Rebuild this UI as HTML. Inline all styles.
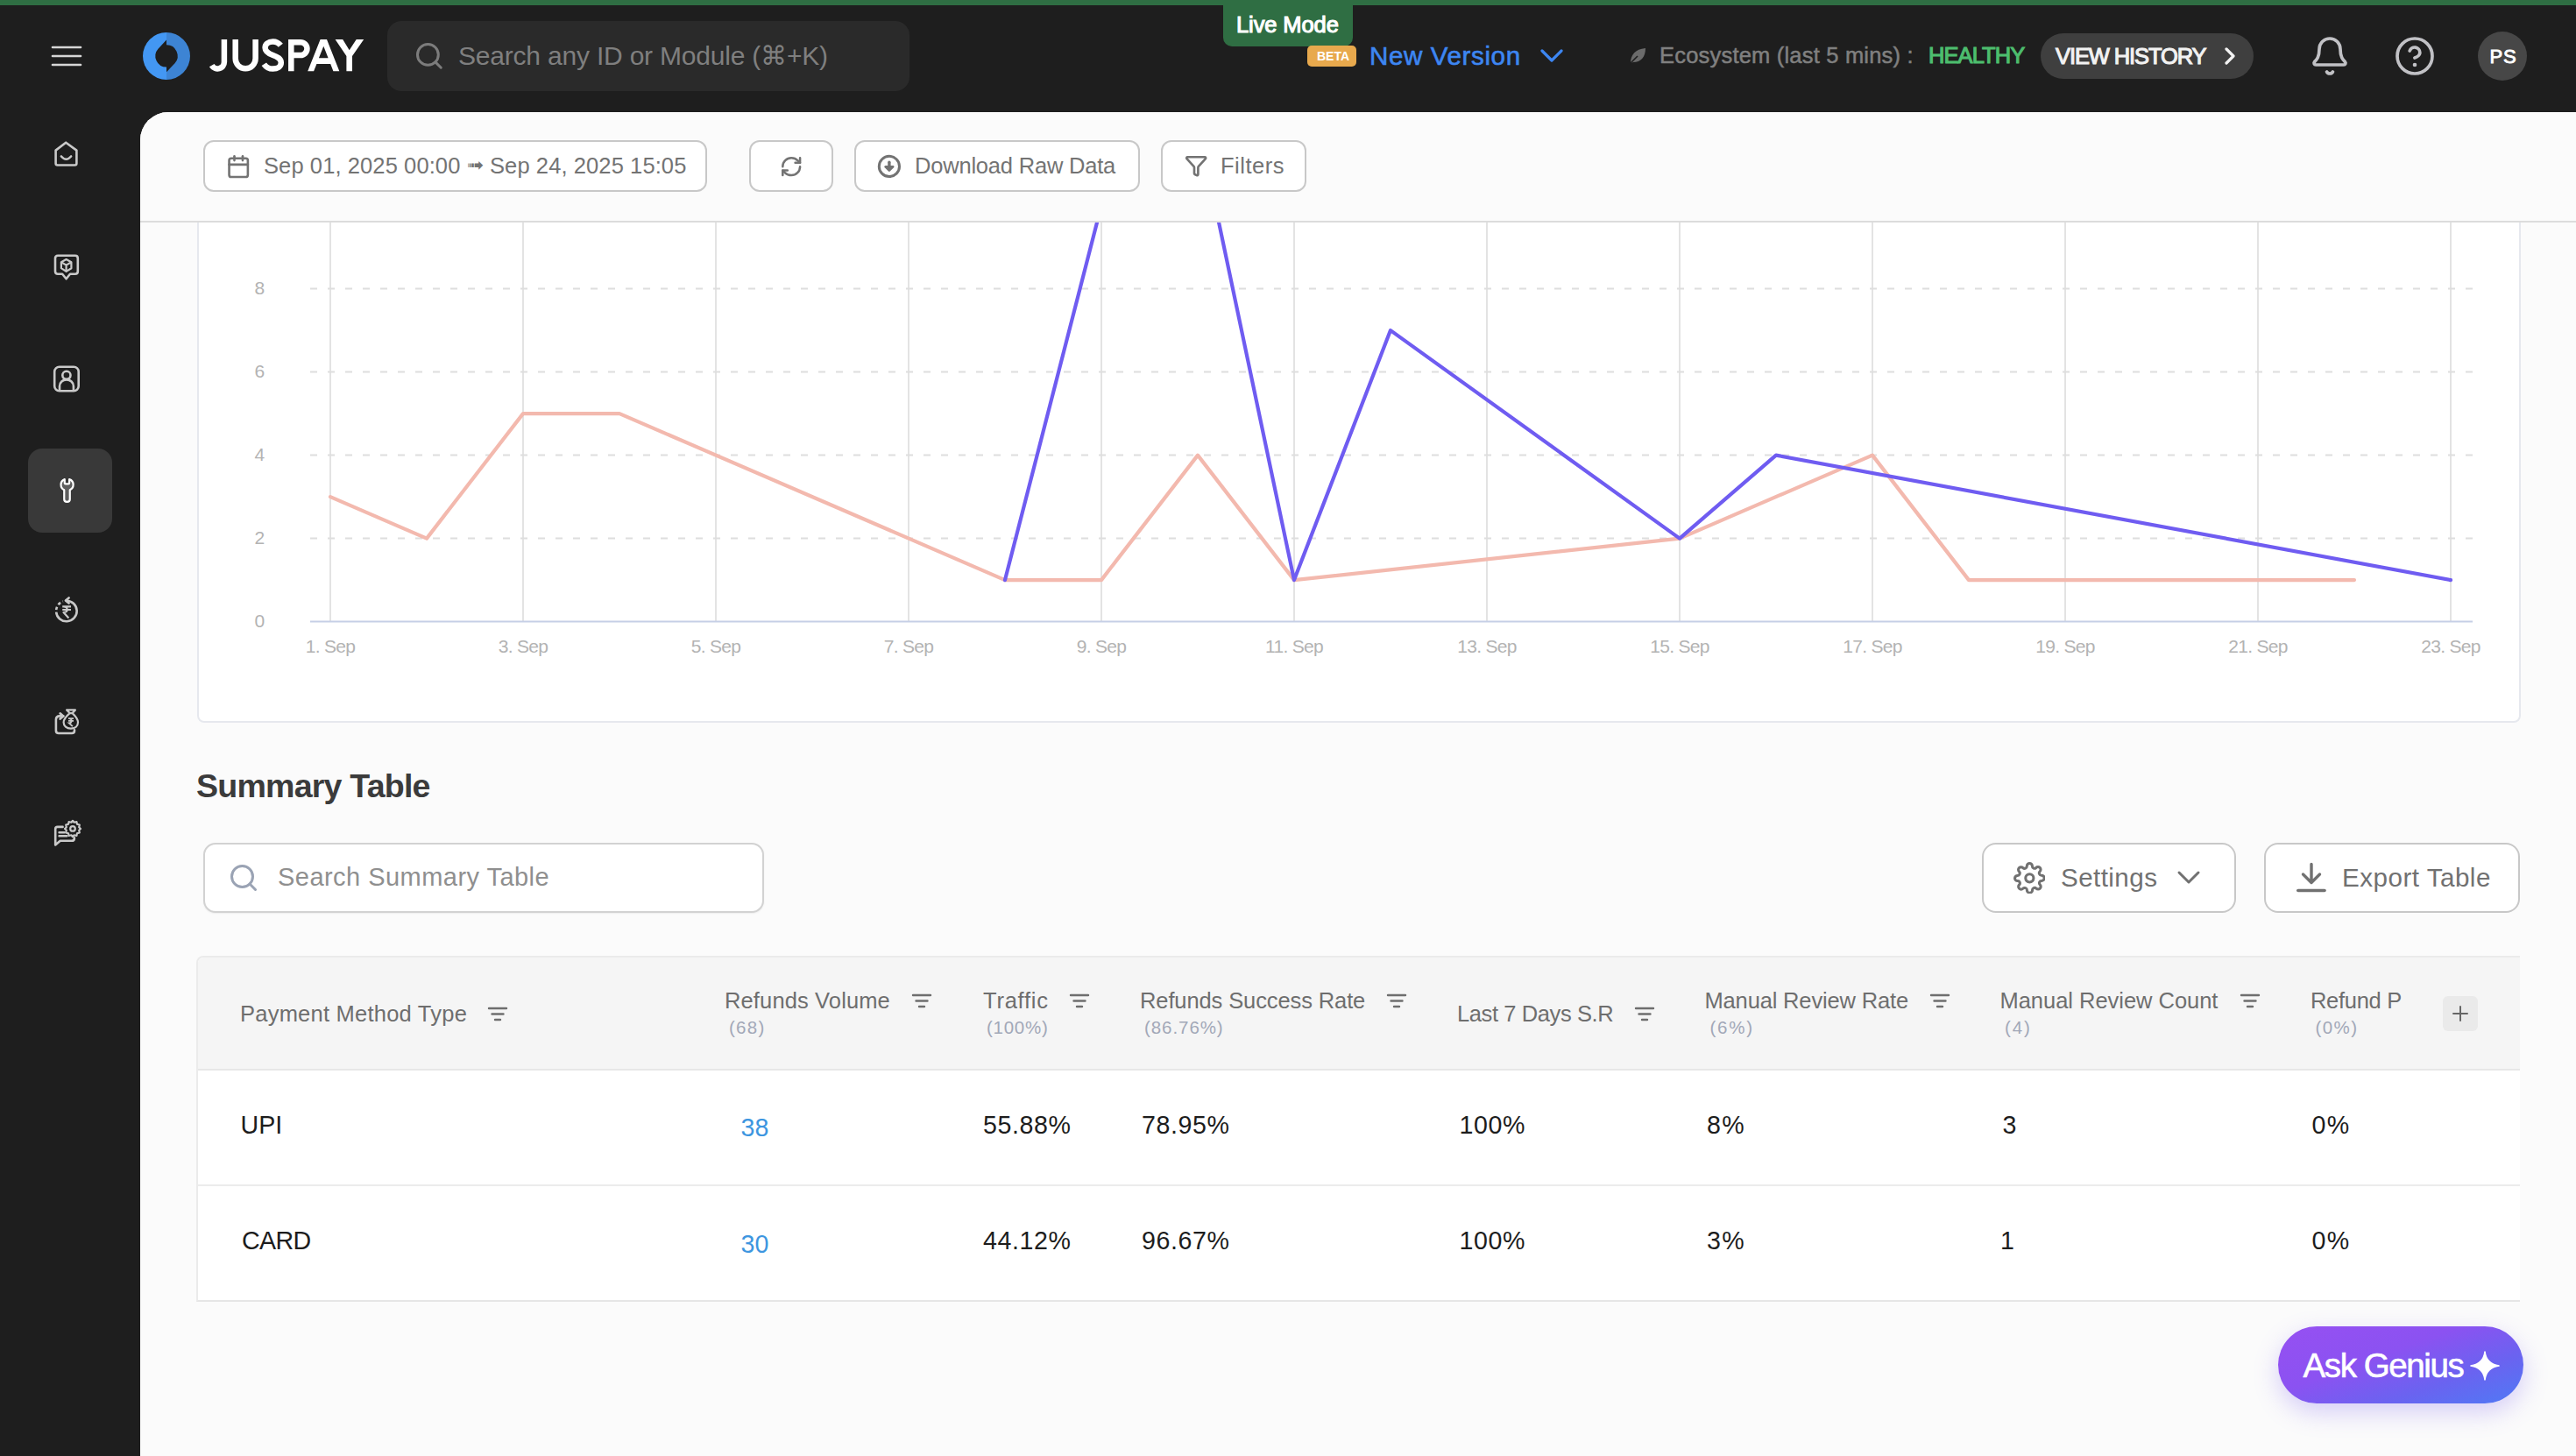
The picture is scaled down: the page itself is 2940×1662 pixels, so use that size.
<!DOCTYPE html>
<html><head><meta charset="utf-8"><title>Juspay Dashboard</title>
<style>
html,body{margin:0;padding:0;}
body{width:2940px;height:1662px;overflow:hidden;position:relative;background:#1e1e1e;font-family:"Liberation Sans", sans-serif;}
.t{position:absolute;white-space:pre;}
.r{position:absolute;}
</style></head><body>
<div class="r" style="left:160px;top:128px;width:2780px;height:1534px;background:#fbfbfb;border-top-left-radius:32px;"></div>
<div class="r" style="left:0px;top:0px;width:2940px;height:6px;background:#2f6e43;"></div>
<div class="r" style="left:1396px;top:0px;width:148px;height:53px;background:#2f6e43;border-radius:0 0 10px 10px;"></div>
<div class="t" style="left:1411.0px;top:15.8px;font-size:25.5px;line-height:25.5px;color:#ffffff;font-weight:400;letter-spacing:-0.1px;-webkit-text-stroke:1.1px #ffffff;">Live Mode</div>
<svg class="r" style="left:56px;top:48px;" width="40" height="32" viewBox="0 0 40 32" fill="none"><line x1="4" y1="6" x2="36" y2="6" stroke="#d6d6d6" stroke-width="2.6" stroke-linecap="round"/><line x1="4" y1="16" x2="36" y2="16" stroke="#d6d6d6" stroke-width="2.6" stroke-linecap="round"/><line x1="4" y1="26" x2="36" y2="26" stroke="#d6d6d6" stroke-width="2.6" stroke-linecap="round"/></svg>
<svg class="r" style="left:163px;top:37px;" width="54" height="54" viewBox="0 0 54 54" fill="none"><path d="M27 0 A27 27 0 0 0 27 54 Z" fill="#4397f3"/><path d="M27 0 A27 27 0 0 1 27 54 Z" fill="#3d84d4"/><path d="M27 8.4 L27 14.3 A12.6 12.6 0 0 1 36.5 35.3 L27 45.2 L27 39.6 A12.6 12.6 0 0 1 17.5 18.7 Z" fill="#1e1e1e"/></svg>
<svg class="r" style="left:0px;top:0px;" width="430" height="100" viewBox="0 0 430 100" fill="none"><g stroke="#ffffff" stroke-width="6.5" fill="none"><path d="M255.9 44.9 L255.9 70.8 A7.6 7.6 0 0 1 241.7 74.6"/><path d="M268.7 44.9 L268.7 66.85 A11.45 11.45 0 0 0 291.6 66.85 L291.6 44.9"/><path d="M320.3 51.8 C318 48.8 315 47.4 311.5 47.4 C306 47.4 302.6 50.5 302.6 54.5 C302.6 59 306 61 311.5 63 C317 65 320.8 67 320.8 71.5 C320.8 76 316.5 78.6 311.5 78.6 C307 78.6 303.5 76.5 301.3 73.2"/><path d="M332.3 81.2 L332.3 48.15 L343 48.15 A7.45 7.45 0 0 1 343 63.05 L332.3 63.05"/></g><path fill="#ffffff" fill-rule="evenodd" d="M351.2 81.2 L365.6 44.9 L373 44.9 L387.3 81.2 L380.4 81.2 L377.2 73 L361.4 73 L358.1 81.2 Z M363.9 66.3 L369.3 52.8 L374.6 66.3 Z"/><path fill="#ffffff" d="M382.6 44.9 L391.2 44.9 L398.7 57.2 L406.7 44.9 L415.2 44.9 L402 64 L402 81.2 L395.4 81.2 L395.4 64 Z"/></svg>
<div class="r" style="left:442px;top:24px;width:596px;height:80px;background:#2a2a2a;border-radius:16px;"></div>
<svg class="r" style="left:472px;top:46px;" width="35.76" height="35.76" viewBox="0 0 24 24" fill="none" stroke="#7c7c7c" stroke-width="2" stroke-linecap="round" stroke-linejoin="round"><circle cx="11" cy="11" r="8"/><path d="m21 21-4.3-4.3"/></svg>
<div class="t" style="left:523.0px;top:49.3px;font-size:30px;line-height:30px;color:#7f7f7f;font-weight:400;letter-spacing:-0.2px;">Search any ID or Module (⌘+K)</div>
<div class="r" style="left:1492px;top:52px;width:56px;height:24px;background:#e8a94d;border-radius:5px;"></div>
<div class="t" style="left:1503.0px;top:57.4px;font-size:14px;line-height:14px;color:#ffffff;font-weight:700;letter-spacing:0px;">BETA</div>
<div class="t" style="left:1563.0px;top:48.7px;font-size:29.6px;line-height:29.6px;color:#3d86f2;font-weight:400;letter-spacing:0.6px;-webkit-text-stroke:0.6px #3d86f2;">New Version</div>
<svg class="r" style="left:1754px;top:52px;" width="34" height="24" viewBox="0 0 34 24" fill="none"><polyline points="6,6 17,17 28,6" stroke="#3d86f2" stroke-width="3.2" fill="none" stroke-linecap="round" stroke-linejoin="round"/></svg>
<svg class="r" style="left:1858px;top:53px;" width="22" height="22" viewBox="0 0 22 22" fill="none"><path d="M3 19 C3 10 8 3 20 2 C20 12 15 18 6 18 Z" fill="#6b6b6b"/><path d="M2 20 L11 11" stroke="#1e1e1e" stroke-width="1.6"/></svg>
<div class="t" style="left:1894.0px;top:51.4px;font-size:25.5px;line-height:25.5px;color:#808080;font-weight:400;letter-spacing:0.2px;-webkit-text-stroke:0.5px #808080;">Ecosystem (last 5 mins) :</div>
<div class="t" style="left:2201.0px;top:51.4px;font-size:25.5px;line-height:25.5px;color:#4dbd6e;font-weight:400;letter-spacing:-0.9px;-webkit-text-stroke:1.1px #4dbd6e;">HEALTHY</div>
<div class="r" style="left:2329px;top:38px;width:243px;height:52px;background:#3f3f3f;border-radius:26px;"></div>
<div class="t" style="left:2346.0px;top:52.1px;font-size:25.5px;line-height:25.5px;color:#f2f2f2;font-weight:400;letter-spacing:-1.1px;-webkit-text-stroke:1.1px #f2f2f2;">VIEW HISTORY</div>
<svg class="r" style="left:2534px;top:52px;" width="24" height="24" viewBox="0 0 24 24" fill="none"><polyline points="7,4 15,12 7,20" stroke="#f2f2f2" stroke-width="3.2" fill="none" stroke-linecap="round" stroke-linejoin="round"/></svg>
<svg class="r" style="left:2635.3px;top:39.85px;" width="48.00" height="48.00" viewBox="0 0 24 24" fill="none" stroke="#c1c1c5" stroke-width="1.85" stroke-linecap="round" stroke-linejoin="round"><path d="M10.268 21a2 2 0 0 0 3.464 0"/><path d="M3.262 15.326A1 1 0 0 0 4 17h16a1 1 0 0 0 .74-1.673C19.41 13.956 18 12.499 18 8A6 6 0 0 0 6 8c0 4.499-1.411 5.956-2.738 7.326"/></svg>
<svg class="r" style="left:2731.85px;top:39.85px;" width="48.00" height="48.00" viewBox="0 0 24 24" fill="none" stroke="#c1c1c5" stroke-width="1.85" stroke-linecap="round" stroke-linejoin="round"><circle cx="12" cy="12" r="10"/><path d="M9.09 9a3 3 0 0 1 5.83 1c0 2-3 3-3 3"/><path d="M12 17h.01" stroke-width="2.3"/></svg>
<div class="r" style="left:2828px;top:36px;width:56px;height:56px;background:#474747;border-radius:50%;"></div>
<div class="t" style="left:2841.5px;top:54.2px;font-size:22px;line-height:22px;color:#ffffff;font-weight:400;letter-spacing:0.8px;-webkit-text-stroke:0.9px #ffffff;">PS</div>
<div class="r" style="left:32px;top:512px;width:96px;height:96px;background:#393939;border-radius:16px;"></div>
<svg class="r" style="left:56px;top:156px;" width="40" height="40" viewBox="0 0 40 40" fill="none"><path d="M7.6 15.6 L19.2 6.7 L31.4 15.6 L31.4 30.5 Q31.4 32.5 29.4 32.5 L9.6 32.5 Q7.6 32.5 7.6 30.5 Z" stroke="#c9c9c9" stroke-width="2.6" stroke-linejoin="round"/><path d="M13.9 22.5 Q19.5 29 25.1 22.5" stroke="#c9c9c9" stroke-width="2.6" stroke-linecap="round"/></svg>
<svg class="r" style="left:56px;top:284px;" width="40" height="40" viewBox="0 0 40 40" fill="none"><path d="M10 7.8 L29.8 7.8 Q32.8 7.8 32.8 10.8 L32.8 25.8 Q32.8 28.8 29.8 28.8 L24 28.8 L19.6 34.3 L15.1 28.8 L10 28.8 Q7 28.8 7 25.8 L7 10.8 Q7 7.8 10 7.8 Z" stroke="#c9c9c9" stroke-width="2.6" stroke-linejoin="round"/><path d="M19.6 12 L25.4 15.2 L25.4 22.2 L19.6 25.9 L13.9 22.2 L13.9 15.2 Z M13.9 15.2 L19.6 18.6 L25.4 15.2 M19.6 18.6 L19.6 25.9" stroke="#c9c9c9" stroke-width="2.2" stroke-linejoin="round"/></svg>
<svg class="r" style="left:56px;top:412px;" width="40" height="40" viewBox="0 0 40 40" fill="none"><rect x="6.2" y="6.8" width="27.5" height="27.5" rx="5.5" stroke="#c9c9c9" stroke-width="2.6"/><circle cx="19.9" cy="16.3" r="4.6" stroke="#c9c9c9" stroke-width="2.6"/><path d="M12 34.3 L12 29 C12 24.5 15.5 21.4 19.9 21.4 C24.3 21.4 27.9 24.5 27.9 29 L27.9 34.3" stroke="#c9c9c9" stroke-width="2.6"/></svg>
<svg class="r" style="left:56px;top:540px;" width="40" height="40" viewBox="0 0 40 40" fill="none"><path d="M17.4 5.6 L17.4 10.4 Q17.4 11.6 18.6 11.6 L22.3 11.6 Q23.5 11.6 23.5 10.4 L23.5 5.6 C27 6.8 28.6 9.5 28.6 12.6 C28.6 16 26.4 18.4 24.2 19.4 L24.2 31.5 C24.2 33.6 22.6 34.8 20.5 34.8 C18.4 34.8 16.8 33.6 16.8 31.5 L16.8 19.4 C14.6 18.4 12.6 16 12.6 12.6 C12.6 9.5 14.2 6.8 17.4 5.6 Z" fill="#5e5e5e" stroke="#ffffff" stroke-width="2.5" stroke-linejoin="round" transform="translate(20.45 20) scale(0.88) translate(-20.45 -20.2)"/></svg>
<svg class="r" style="left:56px;top:676px;" width="40" height="40" viewBox="0 0 40 40" fill="none"><path d="M19.9 9.70 A11.8 11.8 0 1 1 8.14 22.53" stroke="#c9c9c9" stroke-width="2.6" fill="none"/><path d="M8.19 20.06 A11.8 11.8 0 0 1 15.86 10.41" stroke="#c9c9c9" stroke-width="2.6" stroke-dasharray="3.4 2.8" fill="none"/><polyline points="22.6,6.4 18.9,9.5 22.6,12.5" stroke="#c9c9c9" stroke-width="2.6" stroke-linecap="round" stroke-linejoin="round" fill="none"/><path d="M15.2 16.4 L25 16.4 M15.2 20 L25 20 M16.5 16.4 C22 16.4 22 23 16.5 23 L22.4 29.4" stroke="#c9c9c9" stroke-width="2.2" stroke-linejoin="round" fill="none"/></svg>
<svg class="r" style="left:56px;top:804px;" width="40" height="40" viewBox="0 0 40 40" fill="none"><path d="M29 29.4 L29 30 Q29 33 26 33 L10.9 33 Q7.9 33 7.9 30 L7.9 17.6 Q7.9 13.4 12.1 13.4 L16.3 13.4" stroke="#c9c9c9" stroke-width="2.6" fill="none" stroke-linecap="round"/><polyline points="12.6,10.3 16.3,13.4 12.6,16.6" stroke="#c9c9c9" stroke-width="2.6" fill="none" stroke-linecap="round" stroke-linejoin="round"/><path d="M20.1 6.4 L29.9 6.4 L26.6 10.1 L23.6 10.1 Z M23.6 10.1 C19 14 16.6 17 16.6 20.6 C16.6 24.7 20 27.6 24.9 27.6 C29.7 27.6 33 24.7 33 20.6 C33 17 30.8 14 26.6 10.1" stroke="#c9c9c9" stroke-width="2.2" fill="none" stroke-linejoin="round"/><path d="M22 16.1 L28 16.1 M22 18.9 L28 18.9 M22.8 16.1 C26.5 16.1 26.5 21.5 22.8 21.5 L26.9 25.1" stroke="#c9c9c9" stroke-width="1.8" fill="none"/></svg>
<svg class="r" style="left:56px;top:932px;" width="40" height="40" viewBox="0 0 40 40" fill="none"><path d="M15.6 11.9 L9.6 11.9 Q7.2 11.9 7.2 14.3 L7.2 32.5 L12.7 27.8 L25.9 27.8 Q28.9 27.8 28.9 24.4" stroke="#c9c9c9" stroke-width="2.6" fill="none" stroke-linecap="round" stroke-linejoin="round"/><path d="M11.6 18.2 L17.5 18.2 M11.6 22.3 L20.3 22.3" stroke="#c9c9c9" stroke-width="2.6" stroke-linecap="round"/><circle cx="27" cy="13.9" r="2.8" stroke="#c9c9c9" stroke-width="2.2"/><path d="M27 4.8 L28.6 6.7 L31.4 6.0 L32 8.8 L34.8 9.6 L34.2 12.3 L36 14 L34.2 15.7 L34.8 18.4 L32 19.2 L31.4 22 L28.6 21.3 L27 23.2 L25.4 21.3 L22.6 22 L22 19.2 L19.2 18.4 L19.8 15.7 L18 14 L19.8 12.3 L19.2 9.6 L22 8.8 L22.6 6.0 L25.4 6.7 Z" stroke="#c9c9c9" stroke-width="2.2" stroke-linejoin="round"/></svg>
<div class="r" style="left:225px;top:180px;width:2652px;height:645px;background:#ffffff;border:2px solid #e6e8ee;border-radius:8px;box-sizing:border-box;"></div>
<svg class="r" style="left:0;top:0;" width="2940" height="830" viewBox="0 0 2940 830"><line x1="377" y1="200" x2="377" y2="710" stroke="#e3e3e3" stroke-width="2"/><line x1="597" y1="200" x2="597" y2="710" stroke="#e3e3e3" stroke-width="2"/><line x1="817" y1="200" x2="817" y2="710" stroke="#e3e3e3" stroke-width="2"/><line x1="1037" y1="200" x2="1037" y2="710" stroke="#e3e3e3" stroke-width="2"/><line x1="1257" y1="200" x2="1257" y2="710" stroke="#e3e3e3" stroke-width="2"/><line x1="1477" y1="200" x2="1477" y2="710" stroke="#e3e3e3" stroke-width="2"/><line x1="1697" y1="200" x2="1697" y2="710" stroke="#e3e3e3" stroke-width="2"/><line x1="1917" y1="200" x2="1917" y2="710" stroke="#e3e3e3" stroke-width="2"/><line x1="2137" y1="200" x2="2137" y2="710" stroke="#e3e3e3" stroke-width="2"/><line x1="2357" y1="200" x2="2357" y2="710" stroke="#e3e3e3" stroke-width="2"/><line x1="2577" y1="200" x2="2577" y2="710" stroke="#e3e3e3" stroke-width="2"/><line x1="2797" y1="200" x2="2797" y2="710" stroke="#e3e3e3" stroke-width="2"/><line x1="354" y1="614.6" x2="2822" y2="614.6" stroke="#dedede" stroke-width="2" stroke-dasharray="8 12"/><line x1="354" y1="519.6" x2="2822" y2="519.6" stroke="#dedede" stroke-width="2" stroke-dasharray="8 12"/><line x1="354" y1="424.6" x2="2822" y2="424.6" stroke="#dedede" stroke-width="2" stroke-dasharray="8 12"/><line x1="354" y1="329.6" x2="2822" y2="329.6" stroke="#dedede" stroke-width="2" stroke-dasharray="8 12"/><line x1="354" y1="234.6" x2="2822" y2="234.6" stroke="#dedede" stroke-width="2" stroke-dasharray="8 12"/><line x1="354" y1="709.6" x2="2822" y2="709.6" stroke="#c6cfe6" stroke-width="2"/><polyline points="377.0,567.1 487.0,614.6 597.0,472.1 707.0,472.1 1147.0,662.1 1257.0,662.1 1367.0,519.6 1477.0,662.1 1917.0,614.6 2137.0,519.6 2247.0,662.1 2687.0,662.1" stroke="#f3b9ae" stroke-width="4.2" fill="none" stroke-linejoin="round" stroke-linecap="round"/><polyline points="1147.0,662.1 1257.0,234.6 1367.0,139.6 1477.0,662.1 1587.0,377.1 1917.0,614.6 2027.0,519.6 2797.0,662.1" stroke="#6f5cf1" stroke-width="4.2" fill="none" stroke-linejoin="round" stroke-linecap="round"/></svg>
<div class="t" style="left:290.5px;top:698.4px;font-size:21px;line-height:21px;color:#b3b3b3;font-weight:400;letter-spacing:0px;">0</div>
<div class="t" style="left:290.5px;top:603.4px;font-size:21px;line-height:21px;color:#b3b3b3;font-weight:400;letter-spacing:0px;">2</div>
<div class="t" style="left:290.5px;top:508.4px;font-size:21px;line-height:21px;color:#b3b3b3;font-weight:400;letter-spacing:0px;">4</div>
<div class="t" style="left:290.5px;top:413.4px;font-size:21px;line-height:21px;color:#b3b3b3;font-weight:400;letter-spacing:0px;">6</div>
<div class="t" style="left:290.5px;top:318.4px;font-size:21px;line-height:21px;color:#b3b3b3;font-weight:400;letter-spacing:0px;">8</div>
<div class="t" style="left:277px;width:200px;text-align:center;top:727.2px;font-size:21px;line-height:21px;color:#b3b3b3;letter-spacing:-0.7px;">1. Sep</div>
<div class="t" style="left:497px;width:200px;text-align:center;top:727.2px;font-size:21px;line-height:21px;color:#b3b3b3;letter-spacing:-0.7px;">3. Sep</div>
<div class="t" style="left:717px;width:200px;text-align:center;top:727.2px;font-size:21px;line-height:21px;color:#b3b3b3;letter-spacing:-0.7px;">5. Sep</div>
<div class="t" style="left:937px;width:200px;text-align:center;top:727.2px;font-size:21px;line-height:21px;color:#b3b3b3;letter-spacing:-0.7px;">7. Sep</div>
<div class="t" style="left:1157px;width:200px;text-align:center;top:727.2px;font-size:21px;line-height:21px;color:#b3b3b3;letter-spacing:-0.7px;">9. Sep</div>
<div class="t" style="left:1377px;width:200px;text-align:center;top:727.2px;font-size:21px;line-height:21px;color:#b3b3b3;letter-spacing:-0.7px;">11. Sep</div>
<div class="t" style="left:1597px;width:200px;text-align:center;top:727.2px;font-size:21px;line-height:21px;color:#b3b3b3;letter-spacing:-0.7px;">13. Sep</div>
<div class="t" style="left:1817px;width:200px;text-align:center;top:727.2px;font-size:21px;line-height:21px;color:#b3b3b3;letter-spacing:-0.7px;">15. Sep</div>
<div class="t" style="left:2037px;width:200px;text-align:center;top:727.2px;font-size:21px;line-height:21px;color:#b3b3b3;letter-spacing:-0.7px;">17. Sep</div>
<div class="t" style="left:2257px;width:200px;text-align:center;top:727.2px;font-size:21px;line-height:21px;color:#b3b3b3;letter-spacing:-0.7px;">19. Sep</div>
<div class="t" style="left:2477px;width:200px;text-align:center;top:727.2px;font-size:21px;line-height:21px;color:#b3b3b3;letter-spacing:-0.7px;">21. Sep</div>
<div class="t" style="left:2697px;width:200px;text-align:center;top:727.2px;font-size:21px;line-height:21px;color:#b3b3b3;letter-spacing:-0.7px;">23. Sep</div>
<div class="r" style="left:160px;top:128px;width:2780px;height:126px;background:#fbfbfb;border-top-left-radius:32px;border-bottom:2px solid #dcdcdc;box-sizing:border-box;"></div>
<div class="r" style="left:232px;top:160px;width:575px;height:59px;background:#ffffff;border:2px solid #c8c8c8;border-radius:12px;box-sizing:border-box;"></div>
<svg class="r" style="left:258.05px;top:175.9px;" width="28.44" height="28.44" viewBox="0 0 24 24" fill="none" stroke="#737373" stroke-width="2.2" stroke-linecap="round" stroke-linejoin="round"><path d="M8 2v4"/><path d="M16 2v4"/><rect width="18" height="18" x="3" y="4" rx="2"/><path d="M3 10h18"/></svg>
<div class="t" style="left:301.0px;top:176.5px;font-size:25.5px;line-height:25.5px;color:#737373;font-weight:400;letter-spacing:0.1px;">Sep 01, 2025 00:00</div>
<div class="t" style="left:533.0px;top:177.0px;font-size:23px;line-height:23px;color:#737373;font-weight:400;letter-spacing:0px;">➟</div>
<div class="t" style="left:559.0px;top:176.5px;font-size:25.5px;line-height:25.5px;color:#737373;font-weight:400;letter-spacing:0.1px;">Sep 24, 2025 15:05</div>
<div class="r" style="left:855px;top:160px;width:96px;height:59px;background:#ffffff;border:2px solid #c8c8c8;border-radius:12px;box-sizing:border-box;"></div>
<svg class="r" style="left:890px;top:177px;" width="26.40" height="26.40" viewBox="0 0 24 24" fill="none" stroke="#737373" stroke-width="2.3" stroke-linecap="round" stroke-linejoin="round"><path d="M3 12a9 9 0 0 1 9-9 9.75 9.75 0 0 1 6.74 2.74L21 8"/><path d="M21 3v5h-5"/><path d="M21 12a9 9 0 0 1-9 9 9.75 9.75 0 0 1-6.74-2.74L3 16"/><path d="M8 16H3v5"/></svg>
<div class="r" style="left:975px;top:160px;width:326px;height:59px;background:#ffffff;border:2px solid #c8c8c8;border-radius:12px;box-sizing:border-box;"></div>
<svg class="r" style="left:999px;top:174px;" width="32" height="32" viewBox="0 0 32 32" fill="none"><circle cx="15.9" cy="15.9" r="11.6" stroke="#737373" stroke-width="3"/><path d="M15.9 11.2 L15.9 17" stroke="#737373" stroke-width="3.4" stroke-linecap="round"/><path d="M11.6 16.3 L20.2 16.3 L15.9 20.6 Z" fill="#737373" stroke="#737373" stroke-width="2.6" stroke-linejoin="round"/></svg>
<div class="t" style="left:1044.0px;top:176.5px;font-size:25.5px;line-height:25.5px;color:#737373;font-weight:400;letter-spacing:-0.2px;">Download Raw Data</div>
<div class="r" style="left:1325px;top:160px;width:166px;height:59px;background:#ffffff;border:2px solid #c8c8c8;border-radius:12px;box-sizing:border-box;"></div>
<svg class="r" style="left:1352px;top:176px;" width="26.4" height="26.4" viewBox="0 0 24 24" fill="none"><path d="M10 20a1 1 0 0 0 .553.895l2 1A1 1 0 0 0 14 21v-7a2 2 0 0 1 .517-1.341L21.74 4.67A1 1 0 0 0 21 3H3a1 1 0 0 0-.742 1.67l7.225 7.989A2 2 0 0 1 10 14z" stroke="#737373" stroke-width="2.4" stroke-linecap="round" stroke-linejoin="round"/></svg>
<div class="t" style="left:1393.0px;top:176.5px;font-size:25.5px;line-height:25.5px;color:#737373;font-weight:400;letter-spacing:0.5px;">Filters</div>
<div class="t" style="left:224.0px;top:878.9px;font-size:37.6px;line-height:37.6px;color:#3b3b3b;font-weight:700;letter-spacing:-0.8px;">Summary Table</div>
<div class="r" style="left:232px;top:962px;width:640px;height:80px;background:#ffffff;border:2px solid #d2d2d2;border-radius:14px;box-sizing:border-box;box-shadow:0 1px 2px rgba(0,0,0,0.06);"></div>
<svg class="r" style="left:260px;top:984.3px;" width="36.00" height="36.00" viewBox="0 0 24 24" fill="none" stroke="#9aa3b4" stroke-width="2" stroke-linecap="round" stroke-linejoin="round"><circle cx="11" cy="11" r="8"/><path d="m21 21-4.3-4.3"/></svg>
<div class="t" style="left:317.0px;top:987.4px;font-size:29px;line-height:29px;color:#8f8f8f;font-weight:400;letter-spacing:0.46px;">Search Summary Table</div>
<div class="r" style="left:2262px;top:962px;width:290px;height:80px;background:#ffffff;border:2px solid #c8c8c8;border-radius:16px;box-sizing:border-box;"></div>
<svg class="r" style="left:2297.6px;top:983.5px;" width="36.72" height="36.72" viewBox="0 0 24 24" fill="none" stroke="#717171" stroke-width="2" stroke-linecap="round" stroke-linejoin="round"><circle cx="12" cy="12" r="3"/><path d="M19.4 15a1.65 1.65 0 0 0 .33 1.82l.06.06a2 2 0 0 1 0 2.83 2 2 0 0 1-2.83 0l-.06-.06a1.65 1.65 0 0 0-1.82-.33 1.65 1.65 0 0 0-1 1.51V21a2 2 0 0 1-2 2 2 2 0 0 1-2-2v-.09A1.65 1.65 0 0 0 9 19.4a1.65 1.65 0 0 0-1.82.33l-.06.06a2 2 0 0 1-2.83 0 2 2 0 0 1 0-2.83l.06-.06a1.65 1.65 0 0 0 .33-1.82 1.65 1.65 0 0 0-1.51-1H3a2 2 0 0 1-2-2 2 2 0 0 1 2-2h.09A1.65 1.65 0 0 0 4.6 9a1.65 1.65 0 0 0-.33-1.82l-.06-.06a2 2 0 0 1 0-2.83 2 2 0 0 1 2.83 0l.06.06a1.65 1.65 0 0 0 1.82.33H9a1.65 1.65 0 0 0 1-1.51V3a2 2 0 0 1 2-2 2 2 0 0 1 2 2v.09a1.65 1.65 0 0 0 1 1.51 1.65 1.65 0 0 0 1.82-.33l.06-.06a2 2 0 0 1 2.83 0 2 2 0 0 1 0 2.83l-.06.06a1.65 1.65 0 0 0-.33 1.82V9a1.65 1.65 0 0 0 1.51 1H21a2 2 0 0 1 2 2 2 2 0 0 1-2 2h-.09a1.65 1.65 0 0 0-1.51 1z"/></svg>
<div class="t" style="left:2352.0px;top:986.9px;font-size:29.6px;line-height:29.6px;color:#717171;font-weight:400;letter-spacing:0.43px;">Settings</div>
<svg class="r" style="left:2482px;top:991.3px;" width="32" height="22" viewBox="0 0 32 22" fill="none"><polyline points="5,5 16,16 27,5" stroke="#717171" stroke-width="3" fill="none" stroke-linecap="round" stroke-linejoin="round"/></svg>
<div class="r" style="left:2584px;top:962px;width:292px;height:80px;background:#ffffff;border:2px solid #c8c8c8;border-radius:16px;box-sizing:border-box;"></div>
<svg class="r" style="left:2618px;top:983px;" width="40" height="40" viewBox="0 0 40 40" fill="none"><path d="M20 3.5 L20 24 M10.5 15 L20 24.5 L29.5 15" stroke="#717171" stroke-width="3.4" fill="none" stroke-linecap="round" stroke-linejoin="round"/><line x1="4.8" y1="33.5" x2="35" y2="33.5" stroke="#717171" stroke-width="3.6" stroke-linecap="round"/></svg>
<div class="t" style="left:2673.0px;top:986.9px;font-size:29.6px;line-height:29.6px;color:#717171;font-weight:400;letter-spacing:0.49px;">Export Table</div>
<div class="r" style="left:224px;top:1091px;width:2652px;height:395px;background:#ffffff;border:2px solid #ebebeb;border-right:none;border-bottom-color:#e6e6e6;border-radius:8px 0 0 0;box-sizing:border-box;"></div>
<div class="r" style="left:226px;top:1093px;width:2650px;height:127px;background:#f5f5f5;border-radius:6px 0 0 0;"></div>
<div class="r" style="left:226px;top:1220px;width:2650px;height:2px;background:#e7e7e7;"></div>
<div class="r" style="left:226px;top:1352px;width:2650px;height:2px;background:#ececec;"></div>
<div class="t" style="left:274.0px;top:1144.9px;font-size:25.5px;line-height:25.5px;color:#6e6e6e;font-weight:400;letter-spacing:0.23px;">Payment Method Type</div>
<svg class="r" style="left:556px;top:1148px;" width="24" height="20" viewBox="0 0 24 20" fill="none"><path d="M2 3 L22 3 M5.5 9.5 L18.5 9.5 M9 16 L15 16" stroke="#6e6e6e" stroke-width="2.4" stroke-linecap="round"/></svg>
<div class="t" style="left:827.0px;top:1129.9px;font-size:25.5px;line-height:25.5px;color:#6e6e6e;font-weight:400;letter-spacing:0.13px;">Refunds Volume</div>
<svg class="r" style="left:1040px;top:1133px;" width="24" height="20" viewBox="0 0 24 20" fill="none"><path d="M2 3 L22 3 M5.5 9.5 L18.5 9.5 M9 16 L15 16" stroke="#6e6e6e" stroke-width="2.4" stroke-linecap="round"/></svg>
<div class="t" style="left:832.0px;top:1162.6px;font-size:20.5px;line-height:20.5px;color:#a2a8b8;font-weight:400;letter-spacing:1.27px;">(68)</div>
<div class="t" style="left:1122.0px;top:1129.9px;font-size:25.5px;line-height:25.5px;color:#6e6e6e;font-weight:400;letter-spacing:0.77px;">Traffic</div>
<svg class="r" style="left:1220px;top:1133px;" width="24" height="20" viewBox="0 0 24 20" fill="none"><path d="M2 3 L22 3 M5.5 9.5 L18.5 9.5 M9 16 L15 16" stroke="#6e6e6e" stroke-width="2.4" stroke-linecap="round"/></svg>
<div class="t" style="left:1126.0px;top:1162.6px;font-size:20.5px;line-height:20.5px;color:#a2a8b8;font-weight:400;letter-spacing:0.74px;">(100%)</div>
<div class="t" style="left:1301.0px;top:1129.9px;font-size:25.5px;line-height:25.5px;color:#6e6e6e;font-weight:400;letter-spacing:-0.11px;">Refunds Success Rate</div>
<svg class="r" style="left:1582px;top:1133px;" width="24" height="20" viewBox="0 0 24 20" fill="none"><path d="M2 3 L22 3 M5.5 9.5 L18.5 9.5 M9 16 L15 16" stroke="#6e6e6e" stroke-width="2.4" stroke-linecap="round"/></svg>
<div class="t" style="left:1306.0px;top:1162.6px;font-size:20.5px;line-height:20.5px;color:#a2a8b8;font-weight:400;letter-spacing:0.93px;">(86.76%)</div>
<div class="t" style="left:1663.0px;top:1144.9px;font-size:25.5px;line-height:25.5px;color:#6e6e6e;font-weight:400;letter-spacing:-0.4px;">Last 7 Days S.R</div>
<svg class="r" style="left:1865px;top:1148px;" width="24" height="20" viewBox="0 0 24 20" fill="none"><path d="M2 3 L22 3 M5.5 9.5 L18.5 9.5 M9 16 L15 16" stroke="#6e6e6e" stroke-width="2.4" stroke-linecap="round"/></svg>
<div class="t" style="left:1945.5px;top:1129.9px;font-size:25.5px;line-height:25.5px;color:#6e6e6e;font-weight:400;letter-spacing:-0.16px;">Manual Review Rate</div>
<svg class="r" style="left:2202px;top:1133px;" width="24" height="20" viewBox="0 0 24 20" fill="none"><path d="M2 3 L22 3 M5.5 9.5 L18.5 9.5 M9 16 L15 16" stroke="#6e6e6e" stroke-width="2.4" stroke-linecap="round"/></svg>
<div class="t" style="left:1951.5px;top:1162.6px;font-size:20.5px;line-height:20.5px;color:#a2a8b8;font-weight:400;letter-spacing:1.73px;">(6%)</div>
<div class="t" style="left:2282.5px;top:1129.9px;font-size:25.5px;line-height:25.5px;color:#6e6e6e;font-weight:400;letter-spacing:-0.03px;">Manual Review Count</div>
<svg class="r" style="left:2556px;top:1133px;" width="24" height="20" viewBox="0 0 24 20" fill="none"><path d="M2 3 L22 3 M5.5 9.5 L18.5 9.5 M9 16 L15 16" stroke="#6e6e6e" stroke-width="2.4" stroke-linecap="round"/></svg>
<div class="t" style="left:2288.0px;top:1162.6px;font-size:20.5px;line-height:20.5px;color:#a2a8b8;font-weight:400;letter-spacing:1.9px;">(4)</div>
<div class="t" style="left:2637.0px;top:1129.9px;font-size:25.5px;line-height:25.5px;color:#6e6e6e;font-weight:400;letter-spacing:-0.3px;">Refund P</div>
<div class="t" style="left:2642.5px;top:1162.6px;font-size:20.5px;line-height:20.5px;color:#a2a8b8;font-weight:400;letter-spacing:1.4px;">(0%)</div>
<div class="r" style="left:2788px;top:1137px;width:40px;height:40px;background:#eaeaea;border-radius:6px;"></div>
<svg class="r" style="left:2788px;top:1137px;" width="40" height="40" viewBox="0 0 40 40" fill="none"><path d="M20 12 L20 28 M12 20 L28 20" stroke="#666666" stroke-width="2" stroke-linecap="round"/></svg>
<div class="t" style="left:274.5px;top:1269.8px;font-size:28.6px;line-height:28.6px;color:#1d1d1d;font-weight:400;letter-spacing:0px;">UPI</div>
<div class="t" style="left:845.5px;top:1273.3px;font-size:28.6px;line-height:28.6px;color:#3d96e0;font-weight:400;letter-spacing:0px;">38</div>
<div class="t" style="left:1122.0px;top:1269.8px;font-size:28.6px;line-height:28.6px;color:#1d1d1d;font-weight:400;letter-spacing:0.6px;">55.88%</div>
<div class="t" style="left:1303.0px;top:1269.8px;font-size:28.6px;line-height:28.6px;color:#1d1d1d;font-weight:400;letter-spacing:0.6px;">78.95%</div>
<div class="t" style="left:1665.5px;top:1269.8px;font-size:28.6px;line-height:28.6px;color:#1d1d1d;font-weight:400;letter-spacing:0.6px;">100%</div>
<div class="t" style="left:1948.0px;top:1269.8px;font-size:28.6px;line-height:28.6px;color:#1d1d1d;font-weight:400;letter-spacing:1.3px;">8%</div>
<div class="t" style="left:2285.5px;top:1269.8px;font-size:28.6px;line-height:28.6px;color:#1d1d1d;font-weight:400;letter-spacing:1.3px;">3</div>
<div class="t" style="left:2638.5px;top:1269.8px;font-size:28.6px;line-height:28.6px;color:#1d1d1d;font-weight:400;letter-spacing:1.3px;">0%</div>
<div class="t" style="left:276.0px;top:1402.4px;font-size:28.6px;line-height:28.6px;color:#1d1d1d;font-weight:400;letter-spacing:-0.6px;">CARD</div>
<div class="t" style="left:845.5px;top:1405.9px;font-size:28.6px;line-height:28.6px;color:#3d96e0;font-weight:400;letter-spacing:0px;">30</div>
<div class="t" style="left:1122.0px;top:1402.4px;font-size:28.6px;line-height:28.6px;color:#1d1d1d;font-weight:400;letter-spacing:0.6px;">44.12%</div>
<div class="t" style="left:1303.0px;top:1402.4px;font-size:28.6px;line-height:28.6px;color:#1d1d1d;font-weight:400;letter-spacing:0.6px;">96.67%</div>
<div class="t" style="left:1665.5px;top:1402.4px;font-size:28.6px;line-height:28.6px;color:#1d1d1d;font-weight:400;letter-spacing:0.6px;">100%</div>
<div class="t" style="left:1948.0px;top:1402.4px;font-size:28.6px;line-height:28.6px;color:#1d1d1d;font-weight:400;letter-spacing:1.3px;">3%</div>
<div class="t" style="left:2283.0px;top:1402.4px;font-size:28.6px;line-height:28.6px;color:#1d1d1d;font-weight:400;letter-spacing:1.3px;">1</div>
<div class="t" style="left:2638.5px;top:1402.4px;font-size:28.6px;line-height:28.6px;color:#1d1d1d;font-weight:400;letter-spacing:1.3px;">0%</div>
<div class="r" style="left:2600px;top:1514px;width:280px;height:88px;background:linear-gradient(160deg,#9650f2 0%,#8b52f1 40%,#6a63f0 70%,#4f7af5 100%);border-radius:44px;box-shadow:0 10px 28px rgba(120,90,240,0.28);"></div>
<div class="t" style="left:2628.5px;top:1539.6px;font-size:38.5px;line-height:38.5px;color:#ffffff;font-weight:400;letter-spacing:-1.4px;-webkit-text-stroke:0.6px #ffffff;">Ask Genius</div>
<svg class="r" style="left:2818px;top:1541px;" width="36" height="36" viewBox="0 0 36 36" fill="none"><path d="M18 2 Q19.5 15.5 34 18 Q19.5 20.5 18 34 Q16.5 20.5 2 18 Q16.5 15.5 18 2 Z" fill="#ffffff" stroke="#ffffff" stroke-width="1.6" stroke-linejoin="round"/></svg>
</body></html>
